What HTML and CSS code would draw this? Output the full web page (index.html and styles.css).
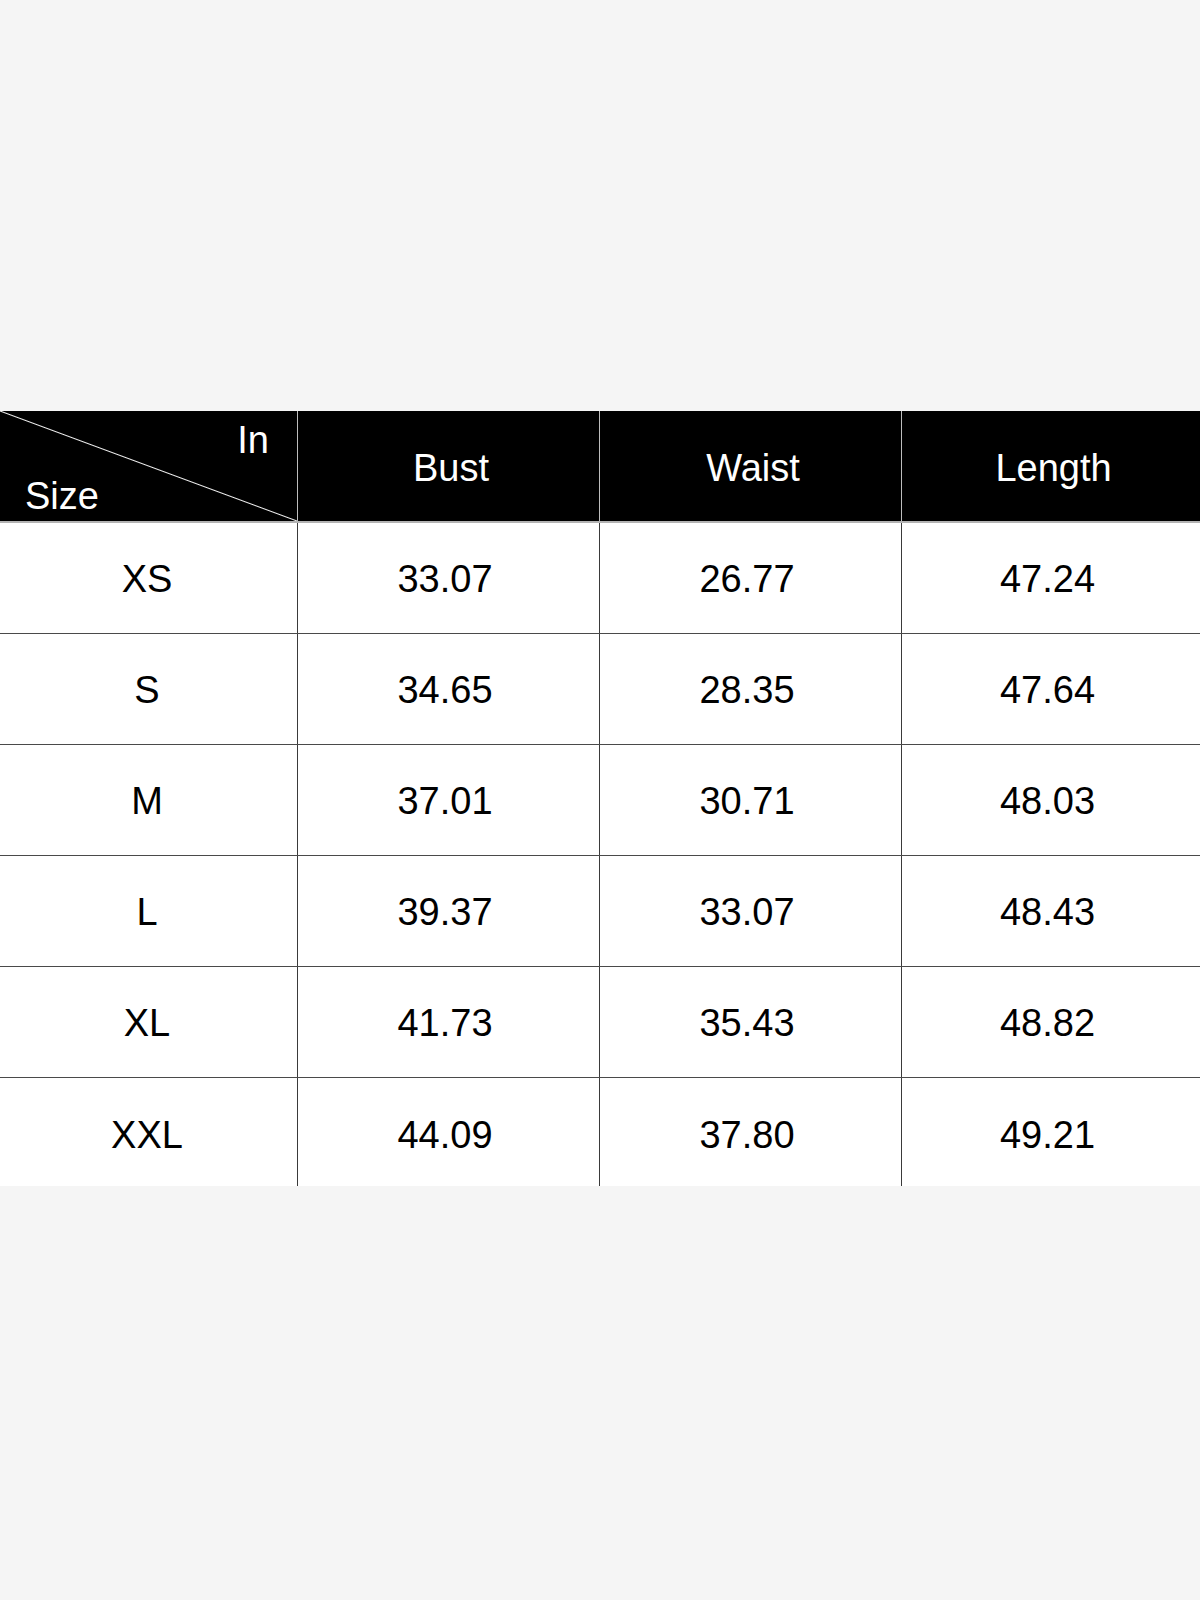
FILE: index.html
```html
<!DOCTYPE html>
<html lang="en">
<head>
<meta charset="utf-8">
<title>Size Chart</title>
<link rel="stylesheet" href="styles.css">
</head>
<body>
<main class="page">
  <section class="chart">
    <div class="row head">
      <div class="cell corner">
        <span class="corner-in">In</span>
        <span class="corner-size">Size</span>
      </div>
      <div class="cell">Bust</div>
      <div class="cell">Waist</div>
      <div class="cell">Length</div>
    </div>
    <div class="row body">
      <div class="cell">XS</div><div class="cell">33.07</div><div class="cell">26.77</div><div class="cell">47.24</div>
    </div>
    <div class="row body">
      <div class="cell">S</div><div class="cell">34.65</div><div class="cell">28.35</div><div class="cell">47.64</div>
    </div>
    <div class="row body">
      <div class="cell">M</div><div class="cell">37.01</div><div class="cell">30.71</div><div class="cell">48.03</div>
    </div>
    <div class="row body">
      <div class="cell">L</div><div class="cell">39.37</div><div class="cell">33.07</div><div class="cell">48.43</div>
    </div>
    <div class="row body">
      <div class="cell">XL</div><div class="cell">41.73</div><div class="cell">35.43</div><div class="cell">48.82</div>
    </div>
    <div class="row body last">
      <div class="cell">XXL</div><div class="cell">44.09</div><div class="cell">37.80</div><div class="cell">49.21</div>
    </div>
  </section>
</main>
</body>
</html>
```

FILE: styles.css
```css
html, body {
  margin: 0;
  padding: 0;
  background: #f5f5f5;
}

.page {
  width: 1200px;
  height: 1600px;
  padding-top: 411px;
  box-sizing: border-box;
  font-family: "Liberation Sans", Arial, sans-serif;
}

.chart {
  width: 1200px;
  display: flex;
  flex-direction: column;
}

.row {
  display: grid;
  grid-template-columns: 297px 302px 302px 1fr;
}

.cell {
  display: flex;
  align-items: center;
  justify-content: center;
  font-size: 38px;
  line-height: 38px;
}

.head {
  height: 110px;
  background: #000;
  color: #fff;
  border-bottom: 2px solid #b3b3b3;
  box-sizing: content-box;
}

.head .cell {
  border-left: 1px solid #bdbdbd;
  padding-left: 5px;
  padding-top: 3px;
}

.head .cell.corner {
  border-left: none;
  padding: 10px 28px 0 25px;
  flex-direction: column;
  align-items: stretch;
  justify-content: flex-start;
  background: linear-gradient(to top right, #000 calc(50% - 1px), #f2f2f2 50%, #000 calc(50% + 1px));
}

.corner-in {
  align-self: flex-end;
}

.corner-size {
  align-self: flex-start;
  margin-top: 18px;
}

.body {
  height: 110px;
  background: #fff;
  color: #000;
  border-bottom: 1px solid #4a4a4a;
  box-sizing: content-box;
}

.body.last {
  border-bottom: none;
  height: 108px;
}

.body .cell {
  border-left: 1px solid #3a3a3a;
  padding-right: 7px;
  padding-top: 2px;
}

.body.last .cell {
  padding-top: 5px;
}

.body .cell:first-child {
  border-left: none;
  padding-right: 3px;
}
```
